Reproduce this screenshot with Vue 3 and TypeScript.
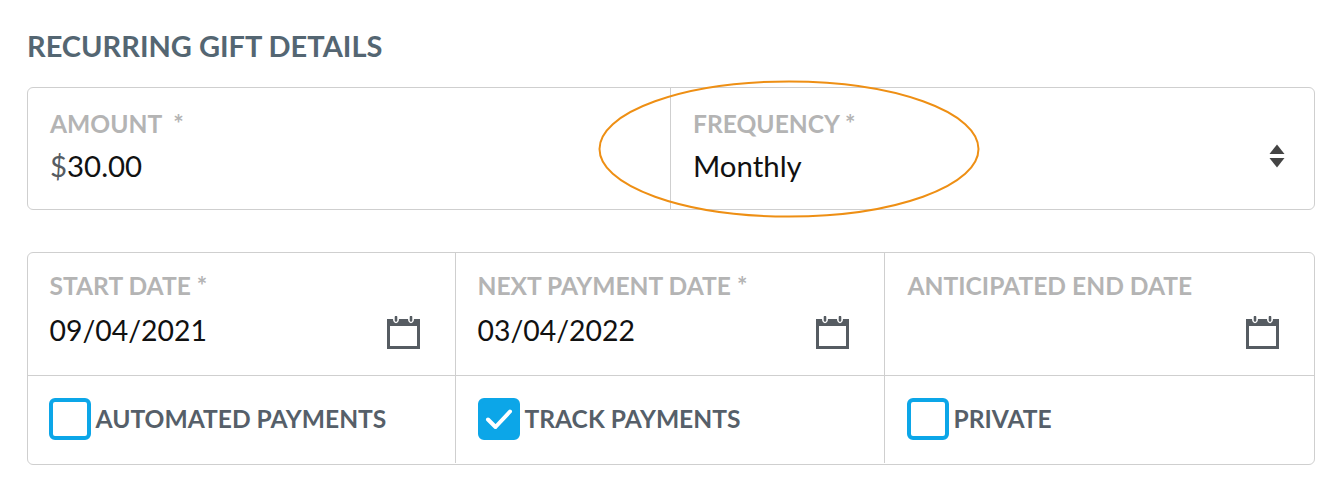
<script setup lang="ts">
interface DateField { label: string; value: string }
interface Check { label: string; checked: boolean }
const dates: DateField[] = [
  { label: 'START DATE *', value: '09/04/2021' },
  { label: 'NEXT PAYMENT DATE *', value: '03/04/2022' },
  { label: 'ANTICIPATED END DATE', value: '' },
]
const checks: Check[] = [
  { label: 'AUTOMATED PAYMENTS', checked: false },
  { label: 'TRACK PAYMENTS', checked: true },
  { label: 'PRIVATE', checked: false },
]
</script>

<template>
  <div class="page">
    <h2 class="title">RECURRING GIFT DETAILS</h2>
    <div class="card top">
      <div class="cell amount">
        <div class="label">AMOUNT&nbsp; *</div>
        <div class="value"><span class="dollar">$</span>30.00</div>
      </div>
      <div class="cell freq">
        <div>
          <div class="label">FREQUENCY *</div>
          <div class="value">Monthly</div>
        </div>
        <svg class="updown" width="16" height="24" viewBox="0 0 16 24">
          <path d="M8 .5 15.5 10H.5Z" fill="#444" />
          <path d="M.5 14H15.5L8 23.5Z" fill="#444" />
        </svg>
      </div>
      <svg class="ellipse" width="384" height="140" viewBox="0 0 384 140">
        <ellipse cx="192" cy="70" rx="189.5" ry="67.5" fill="none" stroke="#ee8f14" stroke-width="2" />
      </svg>
    </div>
    <div class="card bottom">
      <div v-for="d in dates" :key="d.label" class="date">
        <div class="label">{{ d.label }}</div>
        <div class="date-row">
          <span class="value small">{{ d.value }}</span>
          <svg class="cal" width="33" height="33" viewBox="0 0 33 33">
            <path fill-rule="evenodd" fill="#565c62" d="M0 3H6C6 8.5 12 8.5 12 3H21C21 8.5 27 8.5 27 3H33V33H0ZM3 10V30H30V10Z" />
            <path d="M9 1V4.5M24 1V4.5" stroke="#565c62" stroke-width="2.6" stroke-linecap="round" />
          </svg>
        </div>
      </div>
      <div v-for="c in checks" :key="c.label" class="check">
        <span class="box" :class="{ on: c.checked }">
          <svg v-if="c.checked" width="28" height="24" viewBox="0 0 28 24">
            <path d="M3 12.5 10.5 20 25 4.5" fill="none" stroke="#fff" stroke-width="4" stroke-linecap="round" stroke-linejoin="round" />
          </svg>
        </span>
        <span class="check-label">{{ c.label }}</span>
      </div>
    </div>
  </div>
</template>

<style>
html, body { margin: 0; background: #fff; }
</style>

<style scoped>
.page {
  width: 1344px;
  height: 495px;
  box-sizing: border-box;
  padding: 26px 29px 0 27px;
  font-family: Lato, "Liberation Sans", sans-serif;
  overflow: hidden;
}
.title {
  margin: 0 0 22px;
  font-size: 29px;
  line-height: 39px;
  font-weight: 700;
  color: #546672;
}
.card {
  box-sizing: border-box;
  border: 1.5px solid #cfcfcf;
  border-radius: 6px;
  background: #fff;
}
.top {
  position: relative;
  display: grid;
  grid-template-columns: 642px 1fr;
  height: 123px;
  margin-bottom: 42px;
}
.cell { padding: 20px 22px 0; box-sizing: border-box; }
.freq {
  border-left: 1.5px solid #cfcfcf;
  display: flex;
  justify-content: space-between;
  align-items: flex-start;
  padding-right: 29px;
}
.label {
  font-size: 24.6px;
  line-height: 32px;
  font-weight: 700;
  color: #b4b4b4;
  white-space: nowrap;
}
.value {
  font-size: 29.4px;
  line-height: 42px;
  margin-top: 5px;
  color: #111;
}
.dollar { color: #565c62; }
.updown { margin-top: 36px; }
.ellipse {
  position: absolute;
  left: 569px;
  top: -9px;
  pointer-events: none;
}
.bottom {
  display: grid;
  grid-template-columns: 428px 429px 1fr;
  grid-template-rows: 123px 87px;
  height: 213px;
}
.date, .check { box-sizing: border-box; padding-left: 21.5px; }
.date { border-bottom: 1.5px solid #cfcfcf; padding-top: 17px; padding-right: 35.5px; }
.date:nth-child(3) { padding-left: 22.5px; }
.check:nth-child(4) { padding-left: 20.5px; }
.date:not(:nth-child(3)), .check:not(:last-child) { border-right: 1.5px solid #cfcfcf; }
.date-row { display: flex; justify-content: space-between; align-items: center; height: 42px; margin-top: 7px; }
.small { font-size: 28.4px; margin-top: 0; }
.cal { display: block; margin-top: 5px; }
.check { display: flex; align-items: center; gap: 5px; padding-bottom: 2px; }
.box {
  box-sizing: border-box;
  width: 42px;
  height: 42px;
  border: 4px solid #0ca6e8;
  border-radius: 6px;
  display: flex;
  align-items: center;
  justify-content: center;
  flex: none;
}
.box.on { background: #0ca6e8; }
.check-label {
  font-size: 24.6px;
  font-weight: 700;
  color: #565f69;
  white-space: nowrap;
}
</style>
